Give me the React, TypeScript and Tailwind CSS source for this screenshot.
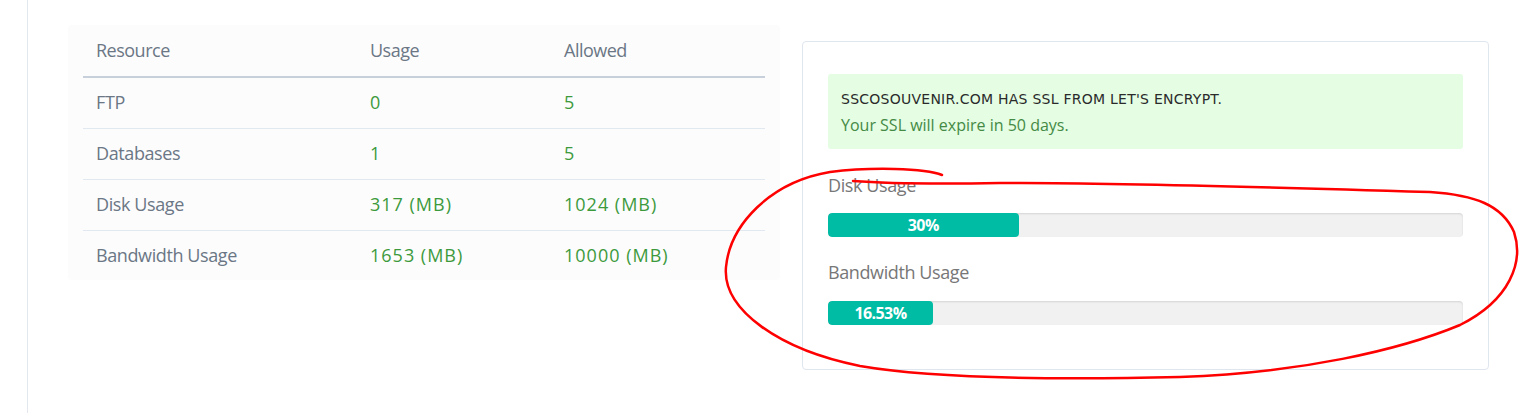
const rows = [
  { name: 'FTP', usage: '0', allowed: '5' },
  { name: 'Databases', usage: '1', allowed: '5' },
  { name: 'Disk Usage', usage: '317 (MB)', allowed: '1024 (MB)' },
  { name: 'Bandwidth Usage', usage: '1653 (MB)', allowed: '10000 (MB)' },
];

const bars = [
  { label: 'Disk Usage', pct: 30, text: '30%' },
  { label: 'Bandwidth Usage', pct: 16.53, text: '16.53%' },
];

function UsageBar({ label, pct, text, first }: { label: string; pct: number; text: string; first?: boolean }) {
  return (
    <div className={first ? 'mt-[24px]' : 'mt-[23px]'}>
      <div className="text-[18px] leading-[24px] tracking-[-0.4px] text-[#777]">{label}</div>
      <div className={`${first ? 'mt-[16px]' : 'mt-[17px]'} h-[24px] rounded-[4px] bg-[#f1f1f1] shadow-[inset_0_1px_2px_rgba(0,0,0,0.12)] overflow-hidden`}>
        <div
          className="h-full rounded-[4px] bg-[#00bca4] flex items-center justify-center text-[16px] font-bold tracking-[-0.6px] text-white"
          style={{ width: `${pct}%` }}
        >
          {text}
        </div>
      </div>
    </div>
  );
}

export default function App() {
  return (
    <div className="relative h-[413px] w-full overflow-hidden bg-white pl-[27px] font-['Open_Sans',sans-serif]">
      <div className="flex h-full items-start border-l border-[#e3e8ef] pl-[40px] pt-[25px]">
        <div className="w-[712px] rounded-[4px] bg-[#fcfcfd] px-[15px]">
          <table className="w-full table-fixed border-collapse text-[18px]">
            <colgroup>
              <col className="w-[274px]" />
              <col className="w-[194px]" />
              <col />
            </colgroup>
            <thead>
              <tr className="h-[52px] border-b-2 border-[#c8d0db] text-left tracking-[-0.5px] text-[#6b7785]">
                <th className="pl-[13px] font-normal">Resource</th>
                <th className="pl-[13px] font-normal">Usage</th>
                <th className="pl-[13px] font-normal">Allowed</th>
              </tr>
            </thead>
            <tbody>
              {rows.map((r, i) => (
                <tr key={r.name} className={i < rows.length - 1 ? 'h-[51px] border-b border-[#e2e8ef]' : 'h-[50px]'}>
                  <td className="pl-[13px] tracking-[-0.4px] text-[#6b7785]">{r.name}</td>
                  <td className="pl-[13px] tracking-[1px] text-[#3c9a3c]">{r.usage}</td>
                  <td className="pl-[13px] tracking-[1px] text-[#3c9a3c]">{r.allowed}</td>
                </tr>
              ))}
            </tbody>
          </table>
        </div>

        <div className="ml-[22px] mt-[16px] w-[687px] rounded-[4px] border border-[#dfe6ee] bg-white px-[25px] pb-[44px] pt-[32px]">
          <div className="h-[75px] rounded-[3px] bg-[#e4fde3] px-[13px] pt-[15px]">
            <div className="font-['DejaVu_Sans',sans-serif] text-[14px] leading-[20px] tracking-[0.25px] text-[#2b2b2b]">
              SSCOSOUVENIR.COM HAS SSL FROM LET'S ENCRYPT.
            </div>
            <div className="mt-[4px] text-[16px] leading-[24px] text-[#458a45]">
              Your SSL will expire in 50 days.
            </div>
          </div>
          {bars.map((b, i) => (
            <UsageBar key={b.label} label={b.label} pct={b.pct} text={b.text} first={i === 0} />
          ))}
        </div>
      </div>

      <svg
        className="pointer-events-none absolute left-0 top-0"
        width="1527"
        height="413"
        viewBox="0 0 1527 413"
        fill="none"
      >
        <path
          d="M 942 175 C 925 168, 870 167, 830 172 C 770 182, 730 225, 726 267 C 722 310, 780 350, 860 366 C 930 378, 1050 380, 1180 377 C 1300 373, 1400 350, 1460 325 C 1510 300, 1524 262, 1514 232 C 1502 205, 1475 195, 1430 192 C 1300 188, 1100 182, 1000 183 C 940 184, 880 183, 853 181"
          stroke="#ff0000"
          strokeWidth="2.5"
          strokeLinecap="round"
        />
      </svg>
    </div>
  );
}
